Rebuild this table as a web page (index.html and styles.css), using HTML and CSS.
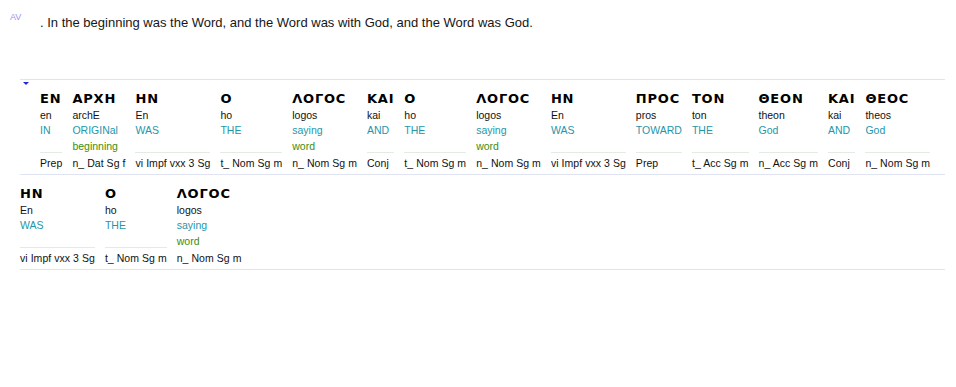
FILE: index.html
```html
<!DOCTYPE html>
<html lang="en">
<head>
<meta charset="utf-8">
<title>John 1:1 interlinear</title>
<link rel="stylesheet" href="styles.css">
</head>
<body>
<div class="verse">
  <span class="ref">AV</span>
  <span class="text">. In the beginning was the Word, and the Word was with God, and the Word was God.</span>
</div>

<div class="interlinear">
  <div class="iline first">
    <span class="marker"></span>
    <div class="w"><div class="gk">ΕΝ</div><div class="tr">en</div><div class="gl">IN</div><div class="gl2"></div><div class="ps">Prep</div></div>
    <div class="w"><div class="gk">ΑΡΧΗ</div><div class="tr">archE</div><div class="gl">ORIGINal</div><div class="gl2 full">beginning</div><div class="ps">n_ Dat Sg f</div></div>
    <div class="w"><div class="gk">ΗΝ</div><div class="tr">En</div><div class="gl">WAS</div><div class="gl2"></div><div class="ps">vi Impf vxx 3 Sg</div></div>
    <div class="w"><div class="gk">Ο</div><div class="tr">ho</div><div class="gl">THE</div><div class="gl2"></div><div class="ps">t_ Nom Sg m</div></div>
    <div class="w"><div class="gk">ΛΟΓΟϹ</div><div class="tr">logos</div><div class="gl">saying</div><div class="gl2 full">word</div><div class="ps">n_ Nom Sg m</div></div>
    <div class="w"><div class="gk">ΚΑΙ</div><div class="tr">kai</div><div class="gl">AND</div><div class="gl2"></div><div class="ps">Conj</div></div>
    <div class="w"><div class="gk">Ο</div><div class="tr">ho</div><div class="gl">THE</div><div class="gl2"></div><div class="ps">t_ Nom Sg m</div></div>
    <div class="w"><div class="gk">ΛΟΓΟϹ</div><div class="tr">logos</div><div class="gl">saying</div><div class="gl2 full">word</div><div class="ps">n_ Nom Sg m</div></div>
    <div class="w"><div class="gk">ΗΝ</div><div class="tr">En</div><div class="gl">WAS</div><div class="gl2"></div><div class="ps">vi Impf vxx 3 Sg</div></div>
    <div class="w"><div class="gk">ΠΡΟϹ</div><div class="tr">pros</div><div class="gl">TOWARD</div><div class="gl2"></div><div class="ps">Prep</div></div>
    <div class="w"><div class="gk">ΤΟΝ</div><div class="tr">ton</div><div class="gl">THE</div><div class="gl2"></div><div class="ps">t_ Acc Sg m</div></div>
    <div class="w"><div class="gk">ΘΕΟΝ</div><div class="tr">theon</div><div class="gl">God</div><div class="gl2"></div><div class="ps">n_ Acc Sg m</div></div>
    <div class="w"><div class="gk">ΚΑΙ</div><div class="tr">kai</div><div class="gl">AND</div><div class="gl2"></div><div class="ps">Conj</div></div>
    <div class="w"><div class="gk">ΘΕΟϹ</div><div class="tr">theos</div><div class="gl">God</div><div class="gl2"></div><div class="ps">n_ Nom Sg m</div></div>
  </div>
  <div class="iline last">
    <div class="w"><div class="gk">ΗΝ</div><div class="tr">En</div><div class="gl">WAS</div><div class="gl2"></div><div class="ps">vi Impf vxx 3 Sg</div></div>
    <div class="w"><div class="gk">Ο</div><div class="tr">ho</div><div class="gl">THE</div><div class="gl2"></div><div class="ps">t_ Nom Sg m</div></div>
    <div class="w"><div class="gk">ΛΟΓΟϹ</div><div class="tr">logos</div><div class="gl">saying</div><div class="gl2 full">word</div><div class="ps">n_ Nom Sg m</div></div>
  </div>
</div>
</body>
</html>
```
FILE: styles.css
```css
html, body {
  margin: 0;
  padding: 0;
  background: #ffffff;
}

body {
  font-family: "Liberation Sans", Arial, sans-serif;
  color: #111111;
}

.verse {
  display: flex;
  align-items: flex-start;
  padding: 15px 0 0 10px;
}

.verse .ref {
  width: 30px;
  flex: none;
  font-size: 9px;
  line-height: 10px;
  margin-top: -3px;
  color: #9c94f2;
}

.verse .text {
  font-size: 13px;
  line-height: 15px;
  color: #161616;
}

.interlinear {
  margin: 49px 11px 0 20px;
}

.iline {
  display: flex;
  align-items: flex-start;
  border-top: 1px solid #dfe3f2;
  padding: 10px 0 3px 0;
}

.iline.last {
  border-bottom: 1px solid #dfe3f2;
}

.marker {
  flex: none;
  width: 20px;
  align-self: flex-start;
  margin-top: -8px;
  height: 10px;
  position: relative;
}

.marker::before {
  content: "";
  position: absolute;
  left: 3px;
  top: 0;
  border-left: 3px solid transparent;
  border-right: 3px solid transparent;
  border-top: 3px solid #1c2bd6;
}

.w {
  flex: none;
  display: flex;
  flex-direction: column;
  margin-right: 10px;
  white-space: nowrap;
}

.gk {
  font-family: "DejaVu Sans", sans-serif;
  font-weight: bold;
  font-size: 13px;
  line-height: 18px;
  letter-spacing: 0.8px;
  color: #000000;
}

.tr, .gl, .gl2, .ps {
  font-size: 10.5px;
  line-height: 15px;
  height: 15px;
}

.tr {
  color: #111111;
}

.gl {
  color: #2596aa;
}

.gl2 {
  box-sizing: border-box;
  border-bottom: 1px solid #e2ece2;
  line-height: 17px;
  color: #3b8e0c;
}

.gl2.full {
  border-bottom: none;
}

.ps {
  margin-top: 3px;
  letter-spacing: 0.05px;
  color: #111111;
}
```
